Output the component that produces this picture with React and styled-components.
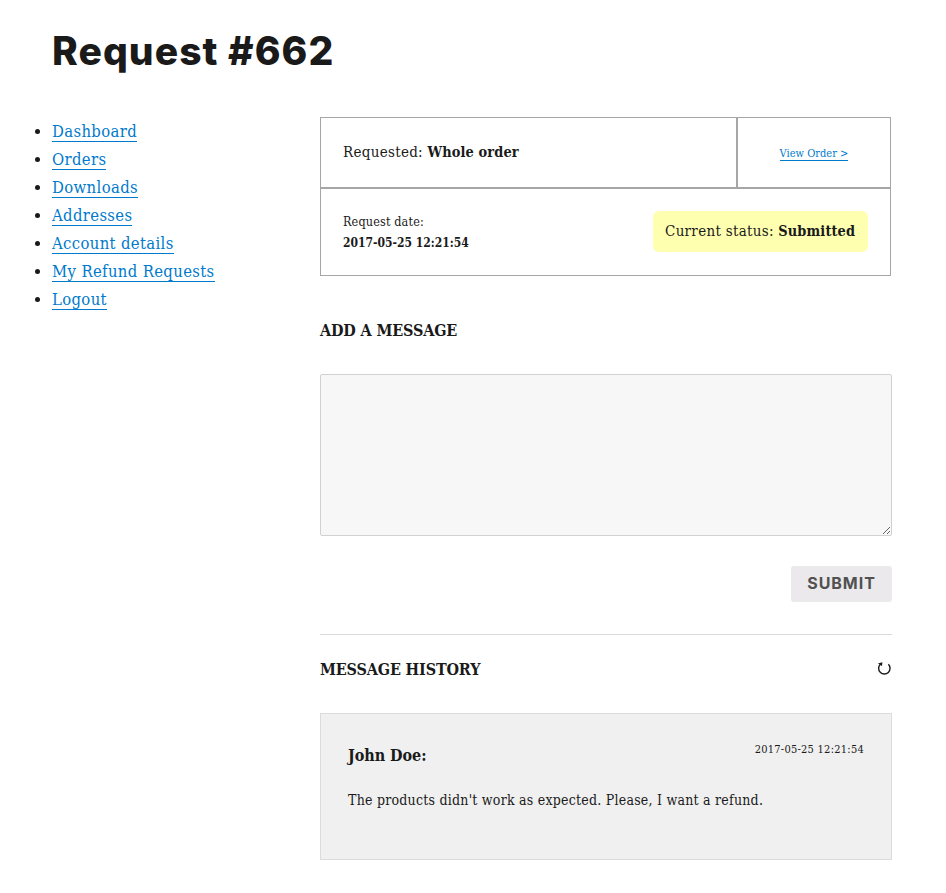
import React from "react";
import styled, { createGlobalStyle } from "styled-components";

const Global = createGlobalStyle`
  * { box-sizing: border-box; }
  body { margin: 0; background: #fff; color: #1a1a1a; font: 16px/28px "DejaVu Serif", serif; font-stretch: condensed; }
`;
const Page = styled.main`
  width: 946px;
  height: 893px;
  padding: 27px 54px 0 52px;
  overflow: hidden;
`;
const Title = styled.h1`
  margin: 0 0 42px;
  font: 800 39px/48px Inter, sans-serif;
  letter-spacing: 1.05px;
`;
const Columns = styled.div`
  display: grid;
  grid-template-columns: 268px 572px;
  align-items: start;
`;
const Nav = styled.ul`
  margin: 0;
  padding: 1px 0 0;
`;
const NavItem = styled.li`
  height: 28px;
`;
const Link = styled.a`
  color: #007acc;
  text-decoration: none;
  border-bottom: 1px solid #007acc;
  font-size: 16.5px;
  letter-spacing: 0.36px;
  display: inline-block;
  line-height: 21px;
  height: 21px;
`;
const OrderLink = styled(Link)`
  font-size: 11px;
  line-height: 15px;
  height: 15px;
  margin-top: 2px;
  letter-spacing: 0;
`;
const Details = styled.section`
  width: 571px;
  display: grid;
  grid-template-columns: 417px 154px;
  grid-template-rows: 71px 88px;
`;
const Cell = styled.div`
  border: 1px solid #a6a6a6;
  padding: 0 22px;
  display: flex;
  align-items: center;
  justify-content: ${(p) => p.$justify || "flex-start"};
  grid-column: ${(p) => (p.$wide ? "1 / -1" : "auto")};
`;
const Field = styled.span`
  padding-bottom: 2px;
  font-size: 15px;
  letter-spacing: 0.3px;
  white-space: pre;
`;
const Strong = styled.strong`
  font-size: 14.4px;
  letter-spacing: 0.12px;
`;
const DateBlock = styled.div`
  padding-top: 1px;
  font-size: 12.5px;
  line-height: 21px;
  letter-spacing: 0.15px;
`;
const DateValue = styled.strong`
  display: block;
  line-height: 22px;
  font-size: 12px;
  letter-spacing: 0;
`;
const Status = styled.div`
  width: 215px;
  height: 41px;
  margin-bottom: 2px;
  padding-left: 12px;
  border-radius: 6px;
  background: #ffffb0;
  line-height: 40px;
`;
const Heading = styled.h2`
  margin: 0;
  padding-top: 1px;
  font-size: 16px;
  line-height: 28px;
  letter-spacing: -0.15px;
  text-transform: uppercase;
`;
const MessageForm = styled.form`
  display: flex;
  flex-direction: column;
  padding: 40px 0 32px;
  border-bottom: 1px solid #d9d9d9;
`;
const MessageInput = styled.textarea`
  width: 572px;
  height: 162px;
  margin: 29px 0 30px;
  border: 1px solid #d1d1d1;
  border-radius: 2px;
  background: #f7f7f7;
  display: block;
  outline: none;
`;
const Submit = styled.button`
  align-self: flex-end;
  width: 101px;
  height: 36px;
  padding: 0 0 2px;
  border: 0;
  border-radius: 3px;
  background: #ebe9eb;
  color: #515151;
  font: 700 16px/34px Inter, sans-serif;
  letter-spacing: 0.95px;
`;
const HistoryHeader = styled.header`
  display: flex;
  align-items: flex-start;
  justify-content: space-between;
  height: 28px;
  margin: 20px 0 30px;
`;
const Refresh = styled.svg`
  width: 16px;
  height: 16px;
  display: block;
  margin-top: 5px;
`;
const Message = styled.article`
  height: 147px;
  padding: 27px;
  border: 1px solid #dcdcdc;
  background: #f0f0f0;
`;
const MessageTop = styled.div`
  display: flex;
  justify-content: space-between;
  height: 45px;
`;
const Author = styled.strong`
  padding-top: 1px;
  letter-spacing: -0.05px;
`;
const Time = styled.time`
  font-size: 11px;
  line-height: 17px;
  letter-spacing: 0.25px;
`;
const Body = styled.p`
  margin: 0;
  font-size: 14px;
  letter-spacing: 0.235px;
`;

const links = ["Dashboard", "Orders", "Downloads", "Addresses", "Account details", "My Refund Requests", "Logout"];

export default function App() {
  return (
    <Page>
      <Global />
      <Title>Request #662</Title>
      <Columns>
        <Nav>
          {links.map((l) => (
            <NavItem key={l}><Link href="#">{l}</Link></NavItem>
          ))}
        </Nav>
        <div>
          <Details>
            <Cell><Field>Requested: <Strong>Whole order</Strong></Field></Cell>
            <Cell $justify="center"><OrderLink href="#">View Order &gt;</OrderLink></Cell>
            <Cell $wide $justify="space-between">
              <DateBlock>Request date:<DateValue>2017-05-25 12:21:54</DateValue></DateBlock>
              <Status><Field>Current status: <Strong>Submitted</Strong></Field></Status>
            </Cell>
          </Details>
          <MessageForm>
            <Heading>Add a message</Heading>
            <MessageInput aria-label="Message" />
            <Submit type="button">SUBMIT</Submit>
          </MessageForm>
          <HistoryHeader>
            <Heading>Message history</Heading>
            <Refresh viewBox="0 0 16 16" aria-label="Refresh">
              <path d="M4.4 4.2A5.7 5.7 0 1 0 12.4 4.3" fill="none" stroke="#1a1a1a" strokeWidth="1.4" />
              <path d="M1.9 3.4L6.4 2.2L6 6Z" fill="#1a1a1a" />
            </Refresh>
          </HistoryHeader>
          <Message>
            <MessageTop><Author>John Doe:</Author><Time>2017-05-25 12:21:54</Time></MessageTop>
            <Body>The products didn't work as expected. Please, I want a refund.</Body>
          </Message>
        </div>
      </Columns>
    </Page>
  );
}
